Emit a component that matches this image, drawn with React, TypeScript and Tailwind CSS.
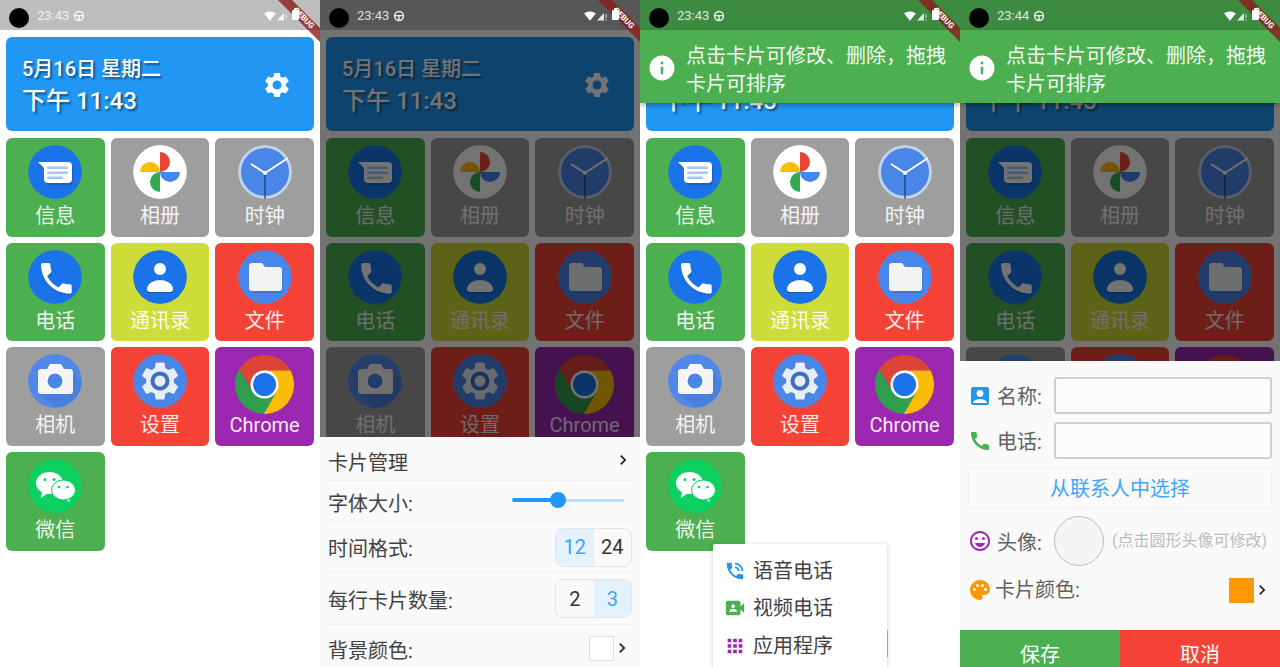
import type { ReactNode } from "react";
import {
  MdAccountBox,
  MdApps,
  MdCall,
  MdChevronRight,
  MdInfo,
  MdOutlineEmojiEmotions,
  MdPalette,
  MdPhoneInTalk,
  MdSettings,
  MdSignalWifi4Bar,
  MdVideoCameraFront,
} from "react-icons/md";

const FONT = "font-['Roboto','Noto_Sans_CJK_SC',sans-serif]";

const GEAR =
  "M19.14 12.94c.04-.3.06-.61.06-.94 0-.32-.02-.64-.07-.94l2.03-1.58c.18-.14.23-.41.12-.61l-1.92-3.32c-.12-.22-.37-.29-.59-.22l-2.39.96c-.5-.38-1.03-.7-1.62-.94l-.36-2.54c-.04-.24-.24-.41-.48-.41h-3.84c-.24 0-.43.17-.47.41l-.36 2.54c-.59.24-1.13.57-1.62.94l-2.39-.96c-.22-.08-.47 0-.59.22L2.74 8.87c-.12.21-.08.47.12.61l2.03 1.58c-.05.3-.09.63-.09.94s.02.64.07.94l-2.03 1.58c-.18.14-.23.41-.12.61l1.92 3.32c.12.22.37.29.59.22l2.39-.96c.5.38 1.03.7 1.62.94l.36 2.54c.05.24.24.41.48.41h3.84c.24 0 .44-.17.47-.41l.36-2.54c.59-.24 1.13-.56 1.62-.94l2.39.96c.22.08.47 0 .59-.22l1.92-3.32c.12-.22.07-.47-.12-.61l-2.01-1.58zM12 15.6c-1.98 0-3.6-1.62-3.6-3.6s1.62-3.6 3.6-3.6 3.6 1.62 3.6 3.6-1.62 3.6-3.6 3.6z";

const Disc = ({ fill, children }: { fill: string; children: ReactNode }) => (
  <svg viewBox="0 0 54 54" className="w-[54px] h-[54px] rounded-full shrink-0">
    <circle cx="27" cy="27" r="27" fill={fill} />
    {children}
  </svg>
);

const MessagesIcon = () => (
  <Disc fill="#1a73e8">
    <path d="M11 19H41a4 4 0 0 1 4 4V36a4 4 0 0 1-4 4H21a4 4 0 0 1-4-4V25Z" fill="#174ea6" opacity="0.6" />
    <path d="M10 17H40a4 4 0 0 1 4 4V34a4 4 0 0 1-4 4H20a4 4 0 0 1-4-4V23Z" fill="#fff" />
    <rect x="19" y="21.5" width="21" height="2.6" rx="1" fill="#a8c4f2" />
    <rect x="19" y="26.5" width="21" height="2.6" rx="1" fill="#a8c4f2" />
    <rect x="19" y="31.5" width="16" height="2.6" rx="1" fill="#a8c4f2" />
  </Disc>
);

const PhotosIcon = () => (
  <Disc fill="#fff">
    <path d="M27 27V7A10 10 0 0 1 27 27Z" fill="#ea4335" />
    <path d="M27 27H47A10 10 0 0 1 27 27Z" fill="#4285f4" />
    <path d="M27 27V47A10 10 0 0 1 27 27Z" fill="#34a853" />
    <path d="M27 27H7A10 10 0 0 1 27 27Z" fill="#fbbc04" />
  </Disc>
);

const ClockIcon = () => (
  <Disc fill="#c3d3e8">
    <circle cx="27" cy="27" r="24" fill="#4a86e8" />
    <path d="M27 28V54" stroke="#1f3b66" strokeWidth="1.2" />
    <path d="M27 28L50 13" stroke="#fff" strokeWidth="2" />
    <path d="M27 28L13 19" stroke="#fff" strokeWidth="2" />
    <circle cx="27" cy="28" r="2" fill="#fff" />
  </Disc>
);

const PhoneIcon = () => (
  <Disc fill="#1a73e8">
    <g transform="translate(8.5 9.5) scale(1.7)">
      <path
        d="M6.62 10.79c1.44 2.83 3.76 5.14 6.59 6.59l2.2-2.2c.27-.27.67-.36 1.02-.24 1.12.37 2.33.57 3.57.57.55 0 1 .45 1 1V20c0 .55-.45 1-1 1-9.39 0-17-7.61-17-17 0-.55.45-1 1-1h3.5c.55 0 1 .45 1 1 0 1.25.2 2.45.57 3.57.11.35.03.74-.25 1.02l-2.2 2.2z"
        fill="#174ea6"
        opacity="0.55"
      />
    </g>
    <g transform="translate(8 8) scale(1.7)">
      <path
        d="M6.62 10.79c1.44 2.83 3.76 5.14 6.59 6.59l2.2-2.2c.27-.27.67-.36 1.02-.24 1.12.37 2.33.57 3.57.57.55 0 1 .45 1 1V20c0 .55-.45 1-1 1-9.39 0-17-7.61-17-17 0-.55.45-1 1-1h3.5c.55 0 1 .45 1 1 0 1.25.2 2.45.57 3.57.11.35.03.74-.25 1.02l-2.2 2.2z"
        fill="#fff"
      />
    </g>
  </Disc>
);

const ContactsIcon = () => (
  <Disc fill="#1a73e8">
    <path d="M14 43V40C14 34 22 31 27 31S40 34 40 40V43Z" fill="#174ea6" opacity="0.7" />
    <circle cx="27" cy="19" r="6" fill="#fff" />
    <path d="M17 42a3 3 0 0 1-3-3C14 33 22 30 27 30S40 33 40 39a3 3 0 0 1-3 3Z" fill="#fff" />
  </Disc>
);

const FilesIcon = () => (
  <Disc fill="#4a86e8">
    <path d="M14 41H44V43H14Z" fill="#3b6fc4" opacity="0.6" />
    <path
      d="M14 13H24L27 17H41a3 3 0 0 1 3 3V38a3 3 0 0 1-3 3H14a3 3 0 0 1-3-3V16a3 3 0 0 1 3-3Z"
      fill="#f1f3f4"
    />
  </Disc>
);

const CameraIcon = () => (
  <Disc fill="#5087e8">
    <path d="M40 14L60 34V60H34L12 40Z" fill="#3b6fc4" opacity="0.3" />
    <path
      d="M13 15H19L22 10H33L36 15H42a3 3 0 0 1 3 3V37a3 3 0 0 1-3 3H13a3 3 0 0 1-3-3V18a3 3 0 0 1 3-3Z"
      fill="#f5f5f5"
    />
    <circle cx="27" cy="27" r="9.5" fill="#fff" />
    <circle cx="27" cy="27" r="7.5" fill="#4a86e8" />
  </Disc>
);

const GearIcon = () => (
  <Disc fill="#4a86e8">
    <g transform="translate(4 4) scale(1.92)">
      <path d={GEAR} fill="#e8eef8" />
    </g>
    <circle cx="27" cy="27" r="9.5" fill="#3b6fc4" />
    <circle cx="27" cy="27" r="5.5" fill="#e8eef8" />
  </Disc>
);

const ChromeIcon = () => (
  <svg viewBox="0 0 59 59" className="w-[59px] h-[59px] shrink-0 mt-[1px]">
    <path d="M29.5 15.5L55.5 15.5A29.5 29.5 0 0 0 4.4 14L17.4 36.5L29.5 29.5Z" fill="#db4437" />
    <path d="M41.6 36.5L28.6 59A29.5 29.5 0 0 0 55.5 15.5L29.5 15.5L29.5 29.5Z" fill="#fbbc05" />
    <path d="M17.4 36.5L4.4 14A29.5 29.5 0 0 0 28.6 59L41.6 36.5L29.5 29.5Z" fill="#2f9e4f" />
    <circle cx="29.5" cy="29.5" r="14" fill="#fff" />
    <circle cx="29.5" cy="29.5" r="11.5" fill="#1a73e8" />
  </svg>
);

const WeChatIcon = () => (
  <Disc fill="#0cd05f">
    <path d="M14 32L13 39L20 34Z" fill="#fff" />
    <ellipse cx="21.5" cy="24" rx="13.5" ry="11" fill="#fff" />
    <circle cx="17" cy="20.5" r="1.5" fill="#0cd05f" />
    <circle cx="26" cy="20.5" r="1.5" fill="#0cd05f" />
    <path d="M40 37L42 43L35 39Z" fill="#fff" />
    <ellipse cx="35.5" cy="31" rx="12" ry="10" fill="#fff" stroke="#0cd05f" strokeWidth="1" />
    <circle cx="31" cy="28" r="1.3" fill="#0cd05f" />
    <circle cx="39.5" cy="28" r="1.3" fill="#0cd05f" />
  </Disc>
);

const cards = [
  { label: "信息", bg: "bg-[#4caf50]", icon: <MessagesIcon /> },
  { label: "相册", bg: "bg-[#9e9e9e]", icon: <PhotosIcon /> },
  { label: "时钟", bg: "bg-[#9e9e9e]", icon: <ClockIcon /> },
  { label: "电话", bg: "bg-[#4caf50]", icon: <PhoneIcon /> },
  { label: "通讯录", bg: "bg-[#cddc39]", icon: <ContactsIcon /> },
  { label: "文件", bg: "bg-[#f44336]", icon: <FilesIcon /> },
  { label: "相机", bg: "bg-[#9e9e9e]", icon: <CameraIcon /> },
  { label: "设置", bg: "bg-[#f44336]", icon: <GearIcon /> },
  { label: "Chrome", bg: "bg-[#9c27b0]", icon: <ChromeIcon /> },
  { label: "微信", bg: "bg-[#4caf50]", icon: <WeChatIcon /> },
];

const StatusBar = ({ time, bg }: { time: string; bg: string }) => (
  <div className={`relative z-20 h-[30px] flex items-center text-white ${bg}`}>
    <div className="absolute left-[9px] top-[8px] w-[20px] h-[20px] rounded-full bg-black" />
    <span className="ml-[37px] mt-[2px] text-[13px] opacity-80">{time}</span>
    <svg viewBox="0 0 12 12" className="ml-[4px] mt-[2px] w-[12px] h-[12px] opacity-90">
      <circle cx="6" cy="6" r="4.4" fill="none" stroke="#fff" strokeWidth="1.5" />
      <path d="M2 5.6H10M6 5.6V10" stroke="#fff" strokeWidth="1.4" />
    </svg>
  </div>
);

// wifi, signal and battery sit on top of the debug ribbon
const StatusIcons = () => (
  <div className="absolute left-[264px] top-[8px] z-40 flex items-start text-white">
    <MdSignalWifi4Bar className="mt-[2px] w-[12px] h-[12px]" />
    <svg viewBox="0 0 12 12" className="mt-[2px] w-[12px] h-[12px]">
      <path d="M1 10.5L8 3V10.5Z" fill="#fff" opacity="0.85" />
      <path d="M10 4V8M10 9.2V10.5" stroke="#fff" strokeWidth="1" opacity="0.8" />
    </svg>
    <div className="ml-[4px] flex flex-col items-center">
      <div className="w-[3px] h-[2px] bg-white" />
      <div className="w-[7px] h-[10px] bg-white rounded-[1px]" />
    </div>
  </div>
);

const DebugRibbon = () => (
  <div className="absolute left-[265px] top-[15px] w-[80px] h-[10px] rotate-45 bg-[#8c1c1c]/80 z-30 flex items-center justify-center">
    <span className="text-[8px] leading-none font-bold text-white ml-[-4px]">DEBUG</span>
  </div>
);

const Home = () => (
  <div className="px-[6px] pt-[7px]">
    <div className="h-[94px] bg-[#2196f3] rounded-[6px] flex items-center justify-between pl-[16px] pr-[22px] text-white">
      <div className="[text-shadow:2px_2px_2px_rgba(0,0,0,0.45)] font-medium pt-[1px]">
        <div className="text-[20px] leading-[32px]">5月16日 星期二</div>
        <div className="text-[24px] leading-[32px]">下午 11:43</div>
      </div>
      <MdSettings className="w-[30px] h-[30px] mt-[2px]" />
    </div>
    <div className="grid grid-cols-3 gap-[6px] mt-[7px]">
      {cards.map((card) => (
        <div
          key={card.label}
          className={`aspect-square rounded-[6px] flex flex-col items-center pt-[7px] text-white ${card.bg}`}
        >
          <div className="h-[54px] shrink-0 flex justify-center">{card.icon}</div>
          <div className="mt-[3px] text-[20px] leading-[28px] opacity-90">{card.label}</div>
        </div>
      ))}
    </div>
  </div>
);

const Barrier = () => <div className="absolute inset-x-0 top-[30px] bottom-0 bg-black/55" />;

const Snack = () => (
  <div className="absolute z-20 left-0 right-0 top-[30px] h-[73px] bg-[#4caf50] flex items-center shadow-[0_2px_5px_rgba(0,0,0,0.35)] text-white">
    <MdInfo className="ml-[7px] mt-[2px] w-[30px] h-[30px] shrink-0" />
    <p className="ml-[9px] mt-[7px] w-[266px] text-[20px] leading-[28px] opacity-95">
      点击卡片可修改、删除，拖拽卡片可排序
    </p>
  </div>
);

const Segments = ({ items, active }: { items: string[]; active: string }) => (
  <div className="flex w-[77px] h-[39px] rounded-[8px] border border-[#e5e5e5] overflow-hidden">
    {items.map((item) => (
      <div
        key={item}
        className={`flex-1 flex items-center justify-center text-[20px] ${
          item === active ? "bg-[#e3f2fd] text-[#42a5f5]" : "text-[#333]"
        }`}
      >
        {item}
      </div>
    ))}
  </div>
);

const SettingsSheet = () => (
  <div className="absolute inset-x-0 top-[437px] h-[230px] bg-[#fafafa] px-[8px] text-[20px] text-[#424242]">
    <div className="h-[44px] flex items-center justify-between border-b border-[#f0f0f0]">
      <span className="mt-[8px]">卡片管理</span>
      <MdChevronRight className="w-[20px] h-[20px] text-[#222] mt-[2px] mr-[-1px]" />
    </div>
    <div className="h-[41px] flex items-center justify-between border-b border-[#f0f0f0]">
      <span className="mt-[5px]">字体大小:</span>
      <div className="w-[112px] mr-[8px] mt-[-2px] flex items-center">
        <div className="w-[46px] h-[4px] rounded-l-full bg-[#2196f3]" />
        <div className="w-[16px] h-[16px] rounded-full bg-[#2196f3] ml-[-8px] shrink-0" />
        <div className="flex-1 h-[3px] rounded-r-full bg-[#bbdefb]" />
      </div>
    </div>
    <div className="h-[51px] flex items-center justify-between border-b border-[#f0f0f0]">
      <span className="mt-[4px]">时间格式:</span>
      <Segments items={["12", "24"]} active="12" />
    </div>
    <div className="h-[52px] flex items-center justify-between border-b border-[#f0f0f0]">
      <span className="mt-[4px]">每行卡片数量:</span>
      <Segments items={["2", "3"]} active="3" />
    </div>
    <div className="h-[42px] flex items-center justify-between">
      <span className="mt-[10px]">背景颜色:</span>
      <div className="flex items-center mt-[4px]">
        <div className="w-[25px] h-[25px] bg-white border border-[#e0e0e0]" />
        <MdChevronRight className="ml-[-2px] w-[20px] h-[20px] text-[#222]" />
      </div>
    </div>
  </div>
);

const MenuItem = ({ icon, label }: { icon: ReactNode; label: string }) => (
  <div className="h-[37.5px] flex items-center pl-[11px]">
    {icon}
    <span className="ml-[7px] text-[20px] text-[#424242]">{label}</span>
  </div>
);

const PopupMenu = () => (
  <>
    <div className="absolute left-[247px] top-[630px] w-[1px] h-[27px] bg-[#9cc09f]" />
    <div className="absolute left-[73px] top-[544px] w-[174px] bottom-0 bg-white rounded-[2px] pt-[8px] shadow-[0_1px_5px_rgba(0,0,0,0.2)]">
      <MenuItem icon={<MdPhoneInTalk className="w-[22px] h-[22px] text-[#2196f3]" />} label="语音电话" />
      <MenuItem icon={<MdVideoCameraFront className="w-[22px] h-[22px] text-[#4caf50]" />} label="视频电话" />
      <MenuItem icon={<MdApps className="w-[22px] h-[22px] text-[#9c27b0]" />} label="应用程序" />
    </div>
  </>
);

const FormRow = ({ icon, label, children }: { icon: ReactNode; label: string; children: ReactNode }) => (
  <div className="flex items-center">
    <div className="w-[24px] shrink-0">{icon}</div>
    <span className="ml-[5px] mt-[3px] w-[57px] shrink-0">{label}</span>
    {children}
  </div>
);

const EditSheet = () => (
  <div className="absolute inset-x-0 top-[361px] h-[317px] bg-[#fafafa] flex flex-col text-[20px] text-[#616161]">
    <div className="px-[8px] pt-[16px] flex flex-col gap-[8px]">
      <FormRow icon={<MdAccountBox className="w-[24px] h-[24px] text-[#2196f3]" />} label="名称:">
        <div className="flex-1 h-[37px] rounded-[3px] border-2 border-[#cfcfcf] bg-[#fcfcfc]" />
      </FormRow>
      <FormRow icon={<MdCall className="w-[24px] h-[24px] text-[#4caf50]" />} label="电话:">
        <div className="flex-1 h-[37px] rounded-[3px] border-2 border-[#cfcfcf] bg-[#fcfcfc]" />
      </FormRow>
      <div className="h-[41px] pt-[3px] rounded-[3px] border border-[#eeeeee] flex items-center justify-center text-[#42a5f5]">
        从联系人中选择
      </div>
      <FormRow icon={<MdOutlineEmojiEmotions className="w-[24px] h-[24px] text-[#9c27b0]" />} label="头像:">
        <div className="w-[50px] h-[50px] rounded-full bg-[#f5f5f5] border border-[#bdbdbd] shrink-0" />
        <span className="ml-[8px] text-[16px] text-[#bdbdbd] whitespace-nowrap">(点击圆形头像可修改)</span>
      </FormRow>
    </div>
    <div className="h-[48px] px-[8px] flex items-center">
      <MdPalette className="w-[24px] h-[24px] text-[#ff9800] shrink-0" />
      <span className="ml-[3px]">卡片颜色:</span>
      <div className="ml-auto flex items-center">
        <div className="w-[25px] h-[25px] bg-[#ff9800]" />
        <MdChevronRight className="ml-[-2px] w-[20px] h-[20px] text-[#222]" />
      </div>
    </div>
    <div className="mt-auto h-[48px] flex text-white">
      <div className="flex-1 bg-[#4caf50] flex items-center justify-center pt-[2px]">保存</div>
      <div className="flex-1 bg-[#f44336] flex items-center justify-center pt-[2px]">取消</div>
    </div>
  </div>
);

const Screen = ({ time, statusBg, children }: { time: string; statusBg: string; children?: ReactNode }) => (
  <div className="relative w-[320px] h-[667px] shrink-0 overflow-hidden bg-white">
    <StatusBar time={time} bg={statusBg} />
    <Home />
    {children}
    <DebugRibbon />
    <StatusIcons />
  </div>
);

export default function App() {
  return (
    <div className={`flex w-[1280px] h-[667px] overflow-hidden ${FONT}`}>
      <Screen time="23:43" statusBg="bg-[#bdbdbd]" />
      <Screen time="23:43" statusBg="bg-[#575757]">
        <Barrier />
        <SettingsSheet />
      </Screen>
      <Screen time="23:43" statusBg="bg-[#3d8b40]">
        <Snack />
        <PopupMenu />
      </Screen>
      <Screen time="23:44" statusBg="bg-[#3d8b40]">
        <Barrier />
        <Snack />
        <EditSheet />
      </Screen>
    </div>
  );
}
